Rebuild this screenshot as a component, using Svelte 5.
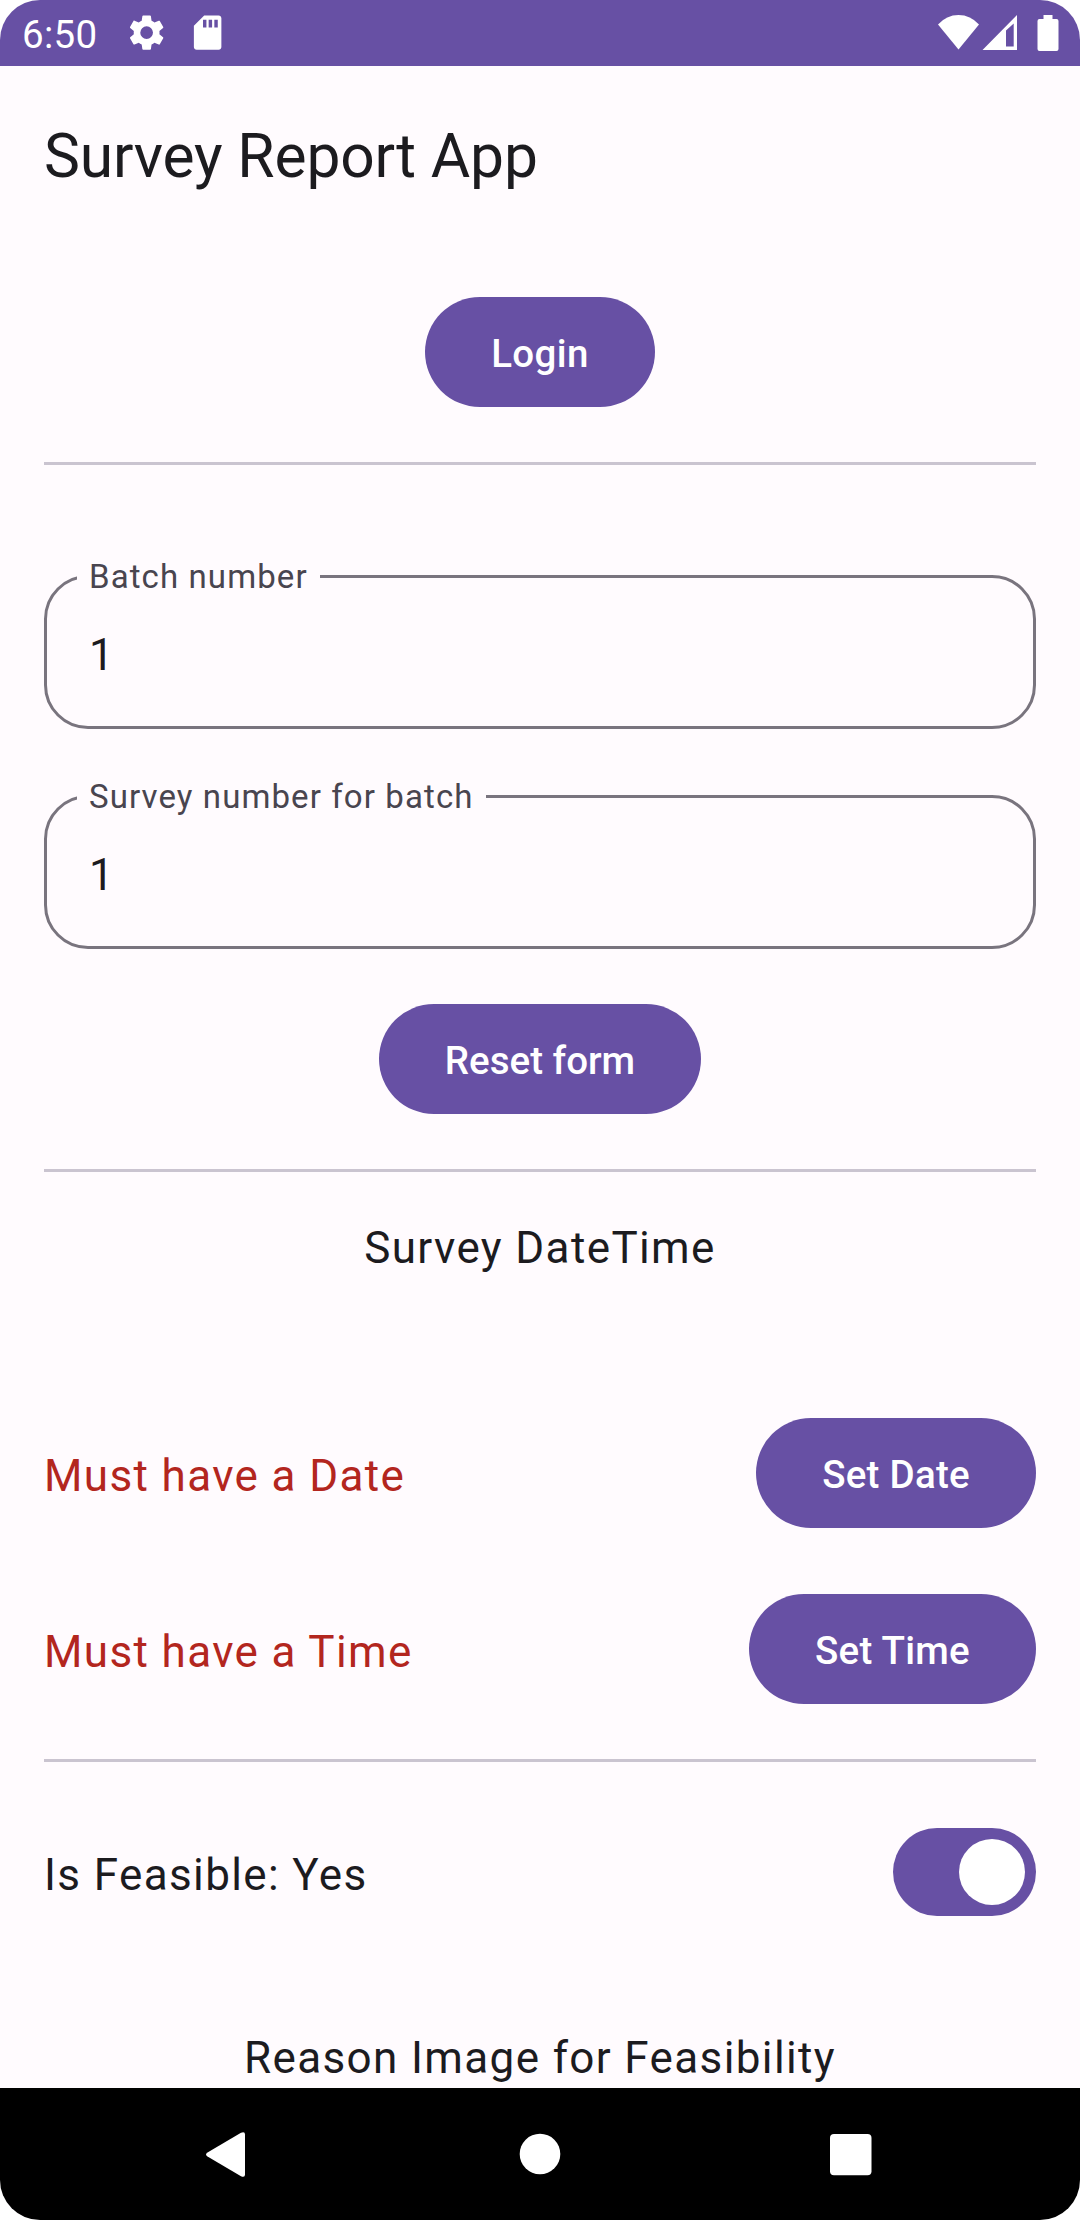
<script>
  let batch = $state('1');
  let survey = $state('1');
  let feasible = $state(true);

  const fields = $derived([
    { label: 'Batch number', value: batch },
    { label: 'Survey number for batch', value: survey },
  ]);

  const moments = [
    { error: 'Must have a Date', action: 'Set Date' },
    { error: 'Must have a Time', action: 'Set Time' },
  ];

  function reset() {
    batch = '1';
    survey = '1';
    feasible = true;
  }
</script>

<div class="screen">
  <div class="status">
    <span class="clock">6:50</span>
    <svg class="gear" viewBox="0 0 24 24"><path d="M19.43 12.98c.04-.32.07-.64.07-.98s-.03-.66-.07-.98l2.11-1.65c.19-.15.24-.42.12-.64l-2-3.46c-.12-.22-.39-.3-.61-.22l-2.49 1c-.52-.4-1.08-.73-1.69-.98l-.38-2.65C14.46 2.18 14.25 2 14 2h-4c-.25 0-.46.18-.49.42l-.38 2.65c-.61.25-1.17.59-1.69.98l-2.49-1c-.23-.09-.49 0-.61.22l-2 3.46c-.13.22-.07.49.12.64l2.11 1.65c-.04.32-.07.65-.07.98s.03.66.07.98l-2.11 1.65c-.19.15-.24.42-.12.64l2 3.46c.12.22.39.3.61.22l2.49-1c.52.4 1.08.73 1.69.98l.38 2.65c.03.24.24.42.49.42h4c.25 0 .46-.18.49-.42l.38-2.65c.61-.25 1.17-.59 1.69-.98l2.49 1c.23.09.49 0 .61-.22l2-3.46c.12-.22.07-.49-.12-.64l-2.11-1.65zM12 15.7a3.7 3.7 0 1 1 0-7.4a3.7 3.7 0 0 1 0 7.4z" /></svg>
    <svg class="card" viewBox="0 0 24 24"><path d="M18.400 2h-8.400L4 8v12.400c0 .9.7 1.600 1.600 1.600h12.800c.9 0 1.600-.7 1.600-1.600V3.600c0-.9-.7-1.600-1.600-1.600zM11.300 9h-2V4.500h2v4.500zm3.300 0h-2V4.500h2v4.500zm3.300 0h-2V4.500h2v4.500z" /></svg>
    <svg class="signals" viewBox="0 0 124 40">
      <path d="M0 12.500Q8.500 3 20.500 3T41 12.500L20.500 37.500Z" />
      <path fill-rule="evenodd" d="M44.500 38L79 3V38ZM68 18.500V34.500H75.700V11.500Z" />
      <path d="M105.500 3h9v4h4a2 2 0 0 1 2 2v28a2 2 0 0 1-2 2h-17a2 2 0 0 1-2-2v-28a2 2 0 0 1 2-2h4z" />
    </svg>
  </div>

  <header>Survey Report App</header>

  <main>
    <div class="center"><button class="login">Login</button></div>
    <hr />
    <div class="fields">
      {#each fields as field}
        <div class="field">
          <span class="label">{field.label}</span>
          <span>{field.value}</span>
        </div>
      {/each}
    </div>
    <div class="center"><button class="reset" onclick={reset}>Reset form</button></div>
    <hr />
    <h2>Survey DateTime</h2>
    <div class="moments">
      {#each moments as moment}
        <div class="row">
          <span class="error">{moment.error}</span>
          <button>{moment.action}</button>
        </div>
      {/each}
    </div>
    <hr />
    <div class="row feasible">
      <span>Is Feasible: {feasible ? 'Yes' : 'No'}</span>
      <div
        class="switch"
        class:on={feasible}
        role="switch"
        tabindex="-1"
        aria-checked={feasible}
        aria-label="Is Feasible"
        onclick={() => (feasible = !feasible)}
        onkeydown={() => (feasible = !feasible)}
      >
        <div class="thumb"></div>
      </div>
    </div>
    <h2 class="reason">Reason Image for Feasibility</h2>
  </main>

  <nav>
    <svg viewBox="0 0 60 60"><path d="M9.500 28.500Q6.500 30.500 9.500 32.500L43 52.300Q47 54 47 50.500V10.500Q47 7 43 8.700Z" /></svg>
    <svg viewBox="0 0 60 60"><circle cx="30" cy="30" r="20.300" /></svg>
    <svg viewBox="0 0 60 60"><rect x="8" y="10" width="41.500" height="41.300" rx="4" /></svg>
  </nav>
</div>

<style>
  :global(body) {
    background: #fff;
  }
  .screen {
    display: flex;
    flex-direction: column;
    box-sizing: border-box;
    width: 1080px;
    height: 2220px;
    overflow: hidden;
    border-radius: 40px;
    background: #fffbfe;
    color: #1c1b1f;
    font: 400 44px/66px Roboto, sans-serif;
    letter-spacing: 1.375px;
  }
  .status {
    display: flex;
    flex: none;
    align-items: center;
    box-sizing: border-box;
    height: 66px;
    padding: 0 22px;
    background: #6750a4;
    color: #fff;
    letter-spacing: 0.3px;
  }
  svg {
    fill: currentColor;
    flex: none;
  }
  .clock {
    width: 104px;
    padding-top: 3px;
    font-size: 38.5px;
  }
  .gear,
  .card {
    width: 41.25px;
    height: 41.25px;
  }
  .card {
    margin-left: 20px;
  }
  .signals {
    width: 124px;
    height: 40px;
    margin: 0 -4px 0 auto;
    align-self: flex-start;
    padding-top: 12px;
  }
  header {
    flex: none;
    box-sizing: border-box;
    height: 176px;
    padding: 3px 44px 0;
    font-size: 60.5px;
    line-height: 176px;
    letter-spacing: -0.17px;
  }
  main {
    flex: 1;
    min-height: 0;
    overflow: hidden;
    padding: 55px 44px 0;
  }
  .center {
    display: flex;
    justify-content: center;
  }
  button {
    box-sizing: border-box;
    height: 110px;
    padding: 2px 66px 0;
    border: 0;
    border-radius: 55px;
    background: #6750a4;
    color: #fff;
    font: 500 38.5px/55px Roboto, sans-serif;
    letter-spacing: 0.275px;
    white-space: nowrap;
  }
  .login {
    letter-spacing: 0.4px;
  }
  .reset {
    letter-spacing: 0;
  }
  hr {
    height: 3px;
    margin: 55px 0 0;
    border: 0;
    background: #cac4d0;
  }
  .fields {
    display: grid;
    gap: 66px;
    margin: 110px 0 55px;
  }
  .field {
    position: relative;
    box-sizing: border-box;
    height: 154px;
    padding: 44px 42px 0;
    border: 3px solid #79747e;
    border-radius: 44px;
  }
  .label {
    position: absolute;
    top: -23px;
    left: 30px;
    padding: 0 12px;
    background: #fffbfe;
    color: #49454f;
    font-size: 33px;
    line-height: 44px;
    letter-spacing: 1.1px;
  }
  h2 {
    margin: 43px 0 0;
    font: inherit;
    text-align: center;
  }
  .moments {
    display: grid;
    gap: 66px;
    margin-top: 137px;
  }
  .row {
    display: flex;
    align-items: center;
    justify-content: space-between;
  }
  .row > span {
    padding-top: 5px;
  }
  .error {
    color: #b3261e;
  }
  .feasible {
    height: 88px;
    margin-top: 66px;
  }
  .switch {
    display: flex;
    align-items: center;
    box-sizing: border-box;
    width: 143px;
    height: 88px;
    padding: 0 11px;
    border-radius: 44px;
    background: #79747e;
  }
  .switch.on {
    justify-content: flex-end;
    background: #6750a4;
  }
  .thumb {
    width: 66px;
    height: 66px;
    border-radius: 50%;
    background: #fff;
  }
  .reason {
    margin-top: 109px;
  }
  nav {
    display: flex;
    flex: none;
    align-items: center;
    justify-content: space-between;
    box-sizing: border-box;
    height: 132px;
    padding: 0 198px;
    background: #000;
    color: #fff;
  }
  nav svg {
    width: 60px;
    height: 60px;
  }
</style>
